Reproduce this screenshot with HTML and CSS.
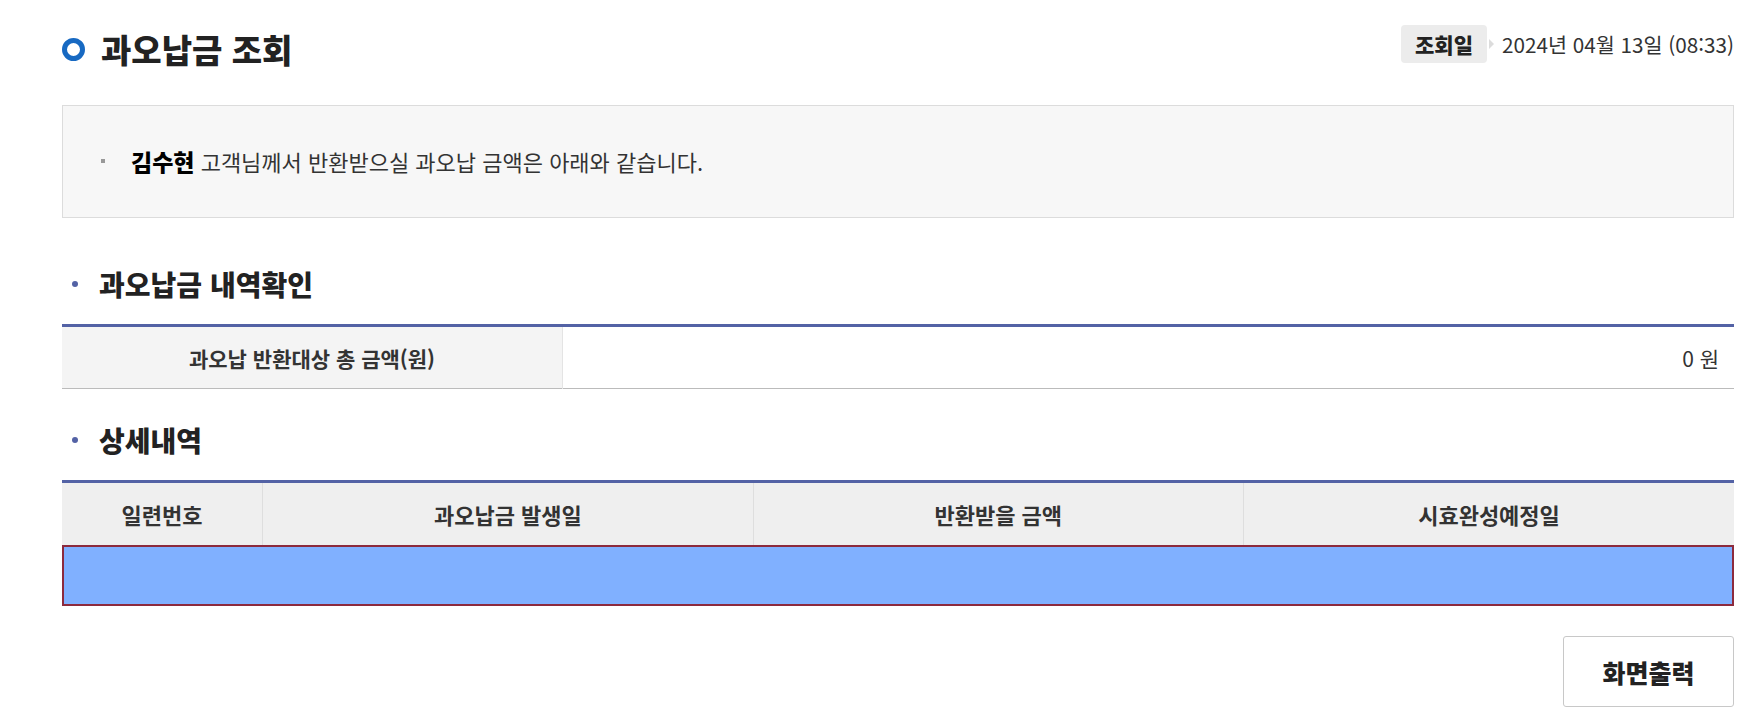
FILE: index.html
```html
<!DOCTYPE html>
<html lang="ko">
<head>
    <meta charset="utf-8">
    <title>과오납금 조회</title>
    <link rel="stylesheet" href="styles.css">
</head>
<body>

    <div class="page">
        <div class="top">
            <h1 class="title"><span class="ring"></span>과오납금 조회</h1>
            <div class="date">
                <span class="badge">조회일</span>
                <span class="arrow"></span>
                <span class="date-text">2024년 04월 13일 (08:33)</span>
            </div>
        </div>

        <div class="notice">
            <span class="square"></span>
            <p><b>김수현</b> 고객님께서 반환받으실 과오납 금액은 아래와 같습니다.</p>
        </div>

        <h2 class="sub"><span class="dot"></span>과오납금 내역확인</h2>
        <table class="sum">
            <tr>
                <th>과오납 반환대상 총 금액(원)</th>
                <td>0 원</td>
            </tr>
        </table>

        <h2 class="sub second"><span class="dot"></span>상세내역</h2>
        <table class="list">
            <thead>
                <tr>
                    <th class="c1">일련번호</th>
                    <th class="c2">과오납금 발생일</th>
                    <th class="c2">반환받을 금액</th>
                    <th class="c2">시효완성예정일</th>
                </tr>
            </thead>
            <tbody>
                <tr class="selected">
                    <td colspan="4"></td>
                </tr>
            </tbody>
        </table>

        <div class="actions">
            <button type="button">화면출력</button>
        </div>
    </div>

</body>
</html>
```

FILE: styles.css
```css
body {
    margin: 0;
    background: white;
    font-family: "Noto Sans CJK KR", "Noto Sans", sans-serif;
    color: #333;
}
.page {
    padding: 0 22px 0 62px;
}
.top {
    display: flex;
    justify-content: space-between;
    align-items: flex-start;
    padding-top: 25px;
}
.title {
    display: flex;
    align-items: center;
    margin: 0;
    font-size: 33px;
    line-height: 48px;
    font-weight: 900;
    color: #222;
}
.ring {
    width: 13px;
    height: 13px;
    border: 5px solid #1769c2;
    border-radius: 50%;
    margin-right: 16px;
}
.date {
    display: flex;
    align-items: center;
}
.badge {
    background: #ececec;
    border-radius: 4px;
    padding: 0 14px;
    height: 38px;
    line-height: 38px;
    font-size: 21px;
    font-weight: 900;
    color: #222;
}
.arrow {
    width: 0;
    height: 0;
    border-top: 5px solid transparent;
    border-bottom: 5px solid transparent;
    border-left: 5px solid #dcdcdc;
    margin: 0 8px 0 2px;
}
.date-text {
    font-size: 20.7px;
    color: #333;
}
.notice {
    display: flex;
    align-items: center;
    margin-top: 32px;
    background: #f7f7f7;
    border: 1px solid #dcdcdc;
    padding: 40px 38px 41px;
}
.square {
    width: 4px;
    height: 4px;
    background: #999;
    margin-right: 26px;
}
.notice p {
    margin: 0;
    font-size: 22px;
    line-height: 30px;
    color: #333;
}
.notice b {
    color: #000;
    font-size: 23px;
    font-weight: 900;
}
.sub {
    display: flex;
    align-items: center;
    margin: 48px 0 22px;
    padding-left: 10px;
    font-size: 28px;
    line-height: 36px;
    font-weight: 900;
    color: #222;
}
.sub.second {
    margin-top: 33px;
}
.dot {
    width: 6px;
    height: 6px;
    border-radius: 50%;
    background: #5362a5;
    margin-right: 21px;
}
table {
    width: 100%;
    border-collapse: collapse;
    font-size: 21px;
}
.sum {
    border-top: 3px solid #5362a5;
    border-bottom: 1px solid #bbb;
}
.sum th {
    width: 500px;
    height: 61px;
    padding: 0;
    background: #f4f4f4;
    border-right: 1px solid #e4e4e4;
    font-weight: 700;
    color: #333;
}
.sum td {
    text-align: right;
    padding-right: 15px;
    color: #333;
}
.list {
    border-top: 3px solid #5362a5;
}
.list th {
    height: 62px;
    padding: 0;
    background: #efefef;
    border-right: 1px solid #dedede;
    font-size: 22px;
    font-weight: 700;
    color: #333;
}
.list th:last-child {
    border-right: none;
}
.list .c1 {
    width: 12%;
}
.list .c2 {
    width: 29.33%;
}
.list td {
    height: 61px;
    padding: 0;
}
.selected {
    background: #80b0ff;
    outline: 2px solid #8c2a3d;
    outline-offset: -2px;
}
.actions {
    display: flex;
    justify-content: flex-end;
    margin-top: 30px;
}
button {
    width: 171px;
    height: 71px;
    background: white;
    border: 1px solid #c8c8c8;
    border-radius: 3px;
    font-family: "Noto Sans CJK KR", "Noto Sans", sans-serif;
    font-size: 25px;
    font-weight: 900;
    color: #222;
    cursor: pointer;
}
```
